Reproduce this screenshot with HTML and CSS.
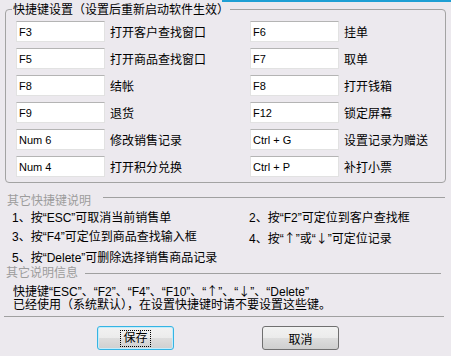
FILE: index.html
```html
<!DOCTYPE html>
<html lang="zh-CN">
<head>
  <meta charset="UTF-8" />
  <title>快捷键设置</title>
  <link rel="stylesheet" href="styles.css">
</head>
<body>

  <div class="topline"></div>

  <div class="group">
    <span class="legend">快捷键设置（设置后重新启动软件生效）</span>
    <div class="keys">
      <div class="key"><input class="key-input" type="text" value="F3"><span class="key-label">打开客户查找窗口</span></div>
      <div class="key"><input class="key-input" type="text" value="F6"><span class="key-label">挂单</span></div>
      <div class="key"><input class="key-input" type="text" value="F5"><span class="key-label">打开商品查找窗口</span></div>
      <div class="key"><input class="key-input" type="text" value="F7"><span class="key-label">取单</span></div>
      <div class="key"><input class="key-input" type="text" value="F8"><span class="key-label">结帐</span></div>
      <div class="key"><input class="key-input" type="text" value="F8"><span class="key-label">打开钱箱</span></div>
      <div class="key"><input class="key-input" type="text" value="F9"><span class="key-label">退货</span></div>
      <div class="key"><input class="key-input" type="text" value="F12"><span class="key-label">锁定屏幕</span></div>
      <div class="key"><input class="key-input" type="text" value="Num 6"><span class="key-label">修改销售记录</span></div>
      <div class="key"><input class="key-input" type="text" value="Ctrl + G"><span class="key-label">设置记录为赠送</span></div>
      <div class="key"><input class="key-input" type="text" value="Num 4"><span class="key-label">打开积分兑换</span></div>
      <div class="key"><input class="key-input" type="text" value="Ctrl + P"><span class="key-label">补打小票</span></div>
    </div>
  </div>

  <div class="section-head shortcuts">
    <span>其它快捷键说明</span>
    <div class="rule"></div>
  </div>

  <div class="tips">
    <div>1、按“ESC”可取消当前销售单</div>
    <div>2、按“F2”可定位到客户查找框</div>
    <div>3、按“F4”可定位到商品查找输入框</div>
    <div>4、按“<span class="arrow">↑</span>”或“<span class="arrow">↓</span>”可定位记录</div>
    <div>5、按“Delete”可删除选择销售商品记录</div>
  </div>

  <div class="section-head info">
    <span>其它说明信息</span>
    <div class="rule"></div>
  </div>

  <div class="info-text">
    快捷键“ESC”、“F2”、“F4”、“F10”、“<span class="arrow">↑</span>”、“<span class="arrow">↓</span>”、“Delete”<br>
    已经使用（系统默认），在设置快捷键时请不要设置这些键。
  </div>

  <div class="divider"></div>

  <div class="actions">
    <button class="btn focused"><span class="focus-ring">保存</span></button>
    <button class="btn">取消</button>
  </div>

</body>
</html>
```

FILE: styles.css
```css
body {
  margin: 0;
  width: 451px;
  height: 356px;
  overflow: hidden;
  background: #ece9ee;
  font-family: "Liberation Sans", "Noto Sans CJK SC", sans-serif;
  font-size: 12px;
  color: #000;
}

.topline {
  height: 2px;
  margin-left: 222px;
  background: #1e9fd4;
}

.group {
  position: relative;
  box-sizing: border-box;
  width: 441px;
  height: 174px;
  margin: 7px 0 0 5px;
  padding: 11px 0 0 10px;
  border: 1px solid #a3a3a3;
  border-radius: 4px;
}

.legend {
  position: absolute;
  top: -8px;
  left: 6px;
  padding: 0 1px;
  line-height: 16px;
  background: #ece9ee;
}

.keys {
  display: grid;
  grid-template-columns: 234px 1fr;
  grid-auto-rows: 21px;
  row-gap: 6px;
}

.key {
  display: flex;
  align-items: flex-start;
}

.key-input {
  box-sizing: border-box;
  width: 89px;
  height: 21px;
  margin: 0;
  padding: 0 2px;
  background: #fff;
  border: 1px solid #e2e2e2;
  border-top-color: #b4b4b4;
  font-family: "Liberation Sans", sans-serif;
  font-size: 11px;
  color: #000;
  outline: none;
}

.key-label {
  margin-left: 5px;
  padding-top: 5px;
  line-height: 14px;
  white-space: nowrap;
}

.section-head {
  display: flex;
  align-items: flex-start;
  color: #9c9c9c;
  line-height: 16px;
}

.section-head .rule {
  flex: 1;
  border-top: 1px solid #a0a0a0;
}

.shortcuts {
  margin: 10px 6px 0 7px;
}

.shortcuts .rule {
  margin: 4px 0 0 12px;
}

.info {
  margin: -3px 10px 0 6px;
}

.info .rule {
  margin: 8px 0 0 7px;
}

.tips {
  display: grid;
  grid-template-columns: 237px 1fr;
  padding-left: 12px;
  line-height: 19px;
}

.arrow {
  font-family: "Noto Sans CJK SC", sans-serif;
}

.info-text {
  margin-top: 3px;
  padding-left: 13px;
  line-height: 13px;
}

.divider {
  margin: 4px 7px 0 4px;
  border-top: 1px solid #a0a0a0;
}

.actions {
  display: flex;
  gap: 88px;
  margin-top: 9px;
  padding-left: 97px;
}

.btn {
  box-sizing: border-box;
  width: 77px;
  height: 24px;
  padding: 0;
  border: 1px solid #707070;
  border-radius: 3px;
  background: linear-gradient(#f2f2f2 0%, #ebebeb 50%, #dddddd 51%, #cfcfcf 100%);
  font-family: inherit;
  font-size: 12px;
  color: #000;
}

.btn.focused {
  border-color: #35b4e3;
  box-shadow: inset 0 0 0 1px #c4ecfb;
}

.focus-ring {
  display: inline-block;
  padding: 1px 2px;
  line-height: 13px;
  border: 1px dotted #000;
}
```
